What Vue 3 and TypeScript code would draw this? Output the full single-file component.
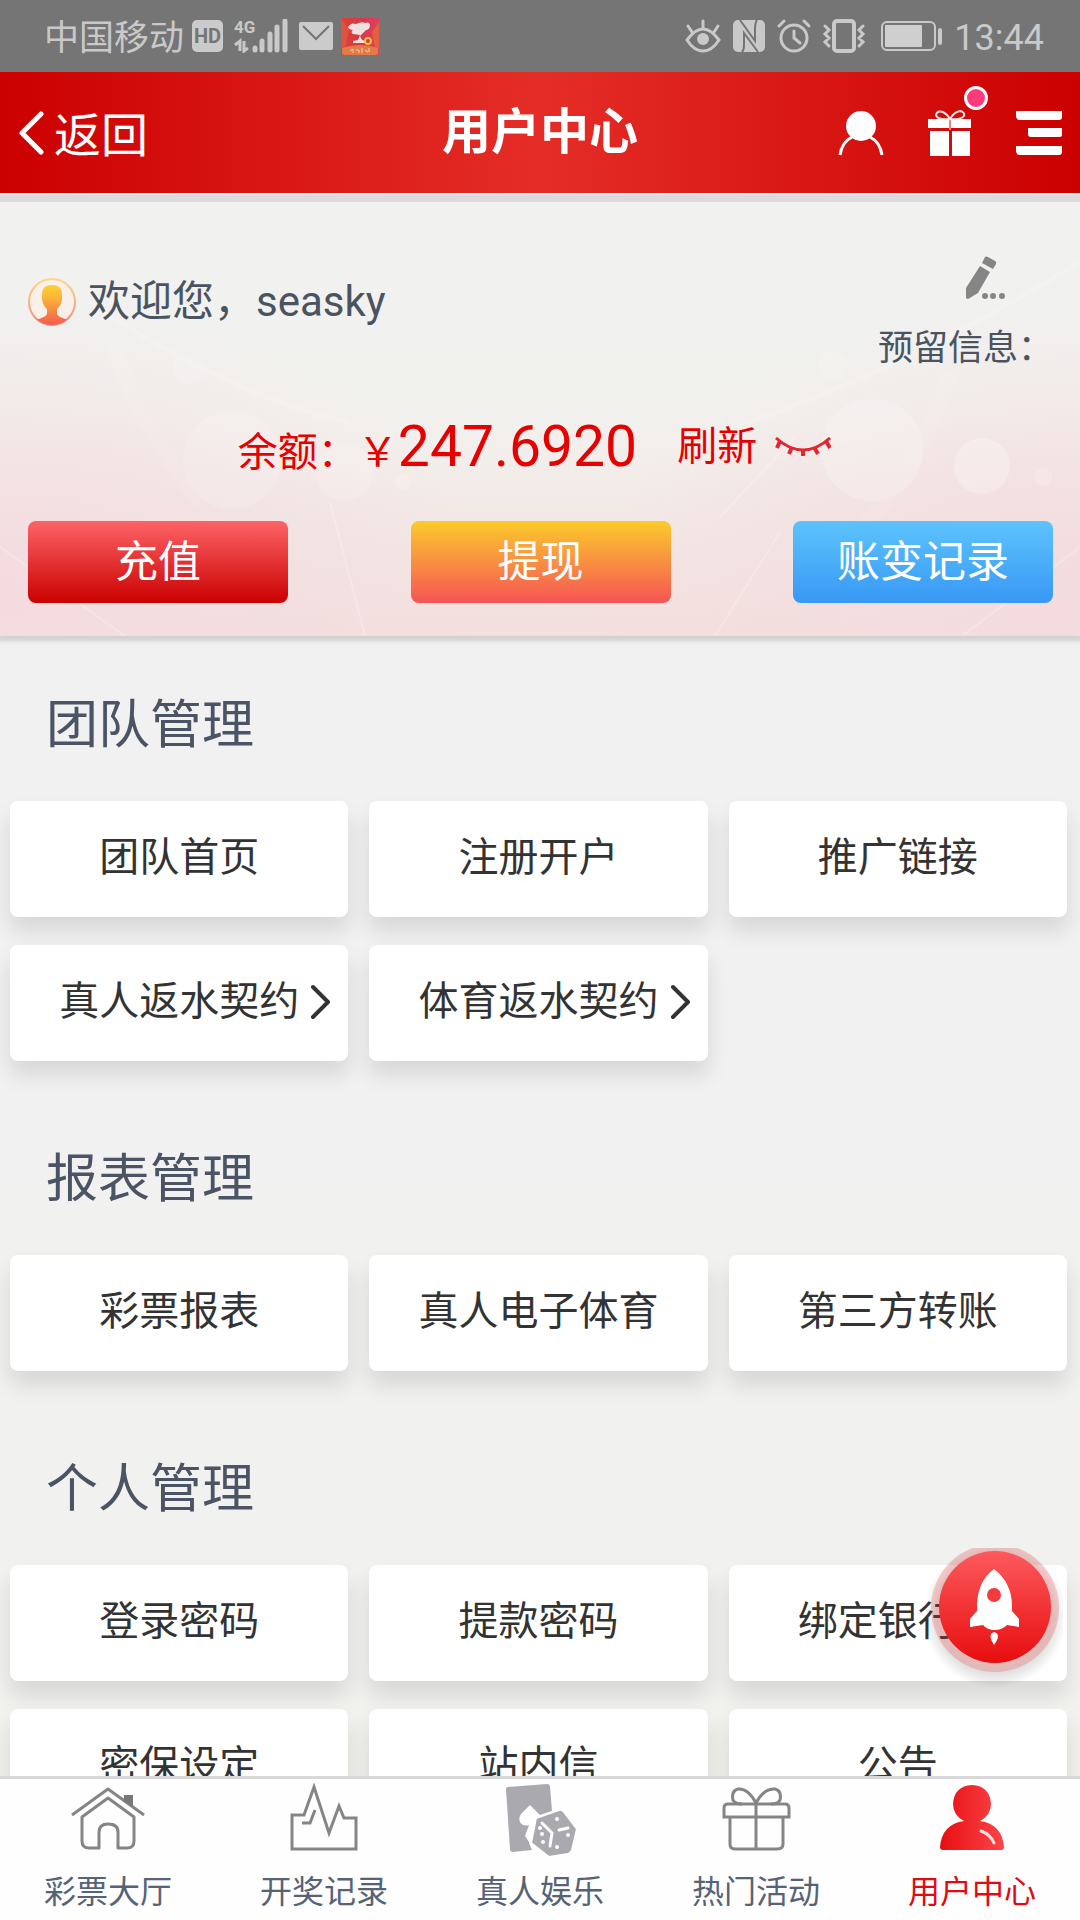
<script setup lang="ts">
interface Card {
  label: string
  arrow?: boolean
}

interface Section {
  title: string
  cards: Card[]
}

interface Tab {
  label: string
  icon: 'home' | 'chart' | 'games' | 'gift' | 'user'
  active?: boolean
}

const sections: Section[] = [
  {
    title: '团队管理',
    cards: [
      { label: '团队首页' },
      { label: '注册开户' },
      { label: '推广链接' },
      { label: '真人返水契约', arrow: true },
      { label: '体育返水契约', arrow: true },
    ],
  },
  {
    title: '报表管理',
    cards: [{ label: '彩票报表' }, { label: '真人电子体育' }, { label: '第三方转账' }],
  },
  {
    title: '个人管理',
    cards: [
      { label: '登录密码' },
      { label: '提款密码' },
      { label: '绑定银行卡' },
      { label: '密保设定' },
      { label: '站内信' },
      { label: '公告' },
    ],
  },
]

const tabs: Tab[] = [
  { label: '彩票大厅', icon: 'home' },
  { label: '开奖记录', icon: 'chart' },
  { label: '真人娱乐', icon: 'games' },
  { label: '热门活动', icon: 'gift' },
  { label: '用户中心', icon: 'user', active: true },
]
</script>

<template>
  <div class="app">
    <div class="status">
      <div class="status-left">
        <span class="carrier">中国移动</span>
        <span class="hd">HD</span>
        <span class="network">
          <span class="network-type">4G</span>
          <svg class="signal" width="54" height="34" viewBox="0 0 54 34" fill="none" stroke="#c9c9c9">
            <path d="M1 26 L6 22 V32 M10 22 V32 L14 29" stroke-width="3" />
            <path d="M21 29v2M28 22v9M36 15v16M43 8v23M51 2v29" stroke-width="5" stroke-linecap="round" />
          </svg>
        </span>
        <svg class="mail" width="34" height="28" viewBox="0 0 34 28">
          <rect width="34" height="28" rx="2" fill="#cbcbcb" />
          <path d="M4 4 L17 17 L30 4" fill="none" stroke="#757575" stroke-width="2" />
        </svg>
        <svg width="38" height="37" viewBox="0 0 38 37">
          <defs>
            <linearGradient id="shop" x1="0" y1="0" x2="1" y2="0">
              <stop offset="0" stop-color="#dc4138" />
              <stop offset=".5" stop-color="#d93745" />
              <stop offset="1" stop-color="#df4060" />
            </linearGradient>
          </defs>
          <rect width="38" height="37" fill="url(#shop)" />
          <path d="M0 0 L8 12 L4 30 H0Z" fill="#dd5540" />
          <path d="M38 4 L31 14 L34 30 H38Z" fill="#e2603f" />
          <path d="M1 30 Q19 24 37 30 V34 Q37 37 34 37 H4 Q1 37 1 34Z" fill="#e27b45" />
          <path d="M7 9 Q10 4 15 6 Q21 3 24 5 Q29 3 29 8 Q28 12 25 12 L19 18 L21 22 L25 23 V25 H12 V23 L17 22 L19 17 L12 16 Q9 14 12 12 Q8 12 7 9Z" fill="#eee1df" />
          <circle cx="27" cy="23" r="3" fill="none" stroke="#e7c436" stroke-width="2" />
          <path d="M9 33 l3 -2 v4 m3 -3 h3 v3 m3 -5 v5 m3 -3 l3 2 m1 -4 v4" fill="none" stroke="#f1cdb4" stroke-width="1" />
        </svg>
      </div>
      <div class="status-right">
        <svg width="36" height="34" viewBox="0 0 36 34" fill="none" stroke="#c9c9c9" stroke-width="3" stroke-linecap="round">
          <path d="M2 21 Q10 10 18 10 Q26 10 34 21 Q27 32 18 32 Q9 32 2 21Z" />
          <circle cx="18" cy="20" r="6" fill="#c9c9c9" stroke="none" />
          <path d="M18 2v7M3 7l4 6M33 7l-4 6" />
        </svg>
        <svg width="34" height="34" viewBox="0 0 34 34">
          <rect x="1" y="1" width="32" height="32" rx="5" fill="#c9c9c9" />
          <path d="M8 1 L23 22 V10 Q23 4 25 1 M26 33 L12 14 V26 Q12 31 10 33" fill="none" stroke="#757575" stroke-width="2" />
        </svg>
        <svg width="34" height="34" viewBox="0 0 34 34" fill="none" stroke="#c9c9c9" stroke-width="3" stroke-linecap="round">
          <circle cx="17" cy="19" r="13" />
          <path d="M17 12v7l6 5M2 7l5-5M32 7l-5-5" />
        </svg>
        <svg width="44" height="34" viewBox="0 0 44 34" fill="none" stroke="#c9c9c9">
          <rect x="12" y="2" width="20" height="30" rx="3" stroke-width="4" />
          <path d="M3 7l4 4-4 4 4 4-4 4 4 4M41 7l-4 4 4 4-4 4 4 4-4 4" stroke-width="3" stroke-linecap="round" />
        </svg>
        <svg class="battery" width="62" height="30" viewBox="0 0 62 30">
          <rect x="1" y="1" width="53" height="28" rx="5" fill="none" stroke="#c9c9c9" stroke-width="2" />
          <rect x="4" y="4" width="37" height="22" rx="1" fill="#cfcfcf" />
          <rect x="57" y="7" width="4" height="17" rx="2" fill="#c9c9c9" />
        </svg>
        <time class="clock">13:44</time>
      </div>
    </div>

    <header class="header">
      <a class="back" href="#">
        <svg width="26" height="46" viewBox="0 0 26 46" fill="none" stroke="#fff" stroke-width="5" stroke-linecap="round" stroke-linejoin="round">
          <path d="M23 4 L4 23 L23 42" />
        </svg>
        <span class="back-label">返回</span>
      </a>
      <h1 class="title">用户中心</h1>
      <div class="tools">
        <button class="tool" type="button" aria-label="账户">
          <svg width="46" height="46" viewBox="0 0 46 46">
            <circle cx="23" cy="16" r="15" fill="#fff" />
            <path d="M2 45 Q4 32 14 27 M32 27 Q42 32 44 45" fill="none" stroke="#fff" stroke-width="3" />
          </svg>
        </button>
        <button class="tool" type="button" aria-label="活动">
          <svg width="46" height="46" viewBox="0 0 46 46">
            <path d="M1 9h43v9H1zM3 21h19v25H3zM25 21h18v25H25z" fill="#fff" />
            <path d="M23 9v11" stroke="#e58080" stroke-width="2" />
            <path d="M22 9 Q10 10 9 5 Q10 0 16 2 Q20 4 23 9 Q27 2 33 1 Q38 2 37 6 Q34 10 23 9" fill="none" stroke="#ffe8e8" stroke-width="2" />
          </svg>
          <span class="dot"></span>
        </button>
        <button class="tool" type="button" aria-label="菜单">
          <svg width="46" height="46" viewBox="0 0 46 46" fill="#fff">
            <path d="M0 1h46v6q0 3-3 3H4q-4 0-4-4zM12 18h34v7q0 2-3 2H15q-3 0-3-3zM0 36h46v6q0 3-3 3H4q-4 0-4-4z" />
          </svg>
        </button>
      </div>
    </header>

    <main class="content">
      <section class="hero">
        <svg class="hero-art" viewBox="0 0 1080 434" preserveAspectRatio="none" fill="none" aria-hidden="true">
          <circle cx="232" cy="258" r="49" fill="#fff" fill-opacity=".15" />
          <circle cx="344" cy="270" r="29" fill="#fff" fill-opacity=".15" />
          <circle cx="403" cy="280" r="8" fill="#fff" fill-opacity=".15" />
          <circle cx="872" cy="248" r="51" fill="#fff" fill-opacity=".2" />
          <circle cx="982" cy="264" r="28" fill="#fff" fill-opacity=".25" />
          <circle cx="1043" cy="275" r="9" fill="#fff" fill-opacity=".2" />
          <circle cx="833" cy="164" r="15" fill="#fff" fill-opacity=".15" />
          <circle cx="190" cy="165" r="17" fill="#fff" fill-opacity=".12" />
          <path d="M90 100 Q220 190 350 221 M745 221 Q900 170 1080 60" stroke="#fff" stroke-opacity=".16" stroke-width="5" />
          <path d="M0 345 L125 434 M330 300 L365 434 M715 434 L780 330 M720 315 L795 235 M962 434 L1080 345" stroke="#fff" stroke-opacity=".22" stroke-width="2" />
          <path d="M110 130 Q130 210 200 300 M950 170 Q920 270 860 325" stroke="#fff" stroke-opacity=".08" stroke-width="16" />
        </svg>
        <div class="hero-top">
          <div class="welcome">
            <svg width="49" height="49" viewBox="0 0 49 49">
              <defs>
                <linearGradient id="avatar" x1="0" y1="0" x2="0" y2="1">
                  <stop offset="0" stop-color="#fbd02f" />
                  <stop offset=".3" stop-color="#fbb53a" />
                  <stop offset="1" stop-color="#f2544f" />
                </linearGradient>
                <clipPath id="avatar-clip"><circle cx="24" cy="24" r="23" /></clipPath>
                <linearGradient id="avatar-ring" x1="0" y1="0" x2="0" y2="1">
                  <stop offset="0" stop-color="#f9d98a" />
                  <stop offset="1" stop-color="#f08a7c" />
                </linearGradient>
              </defs>
              <circle cx="24" cy="24" r="23" fill="#f9f0ea" stroke="url(#avatar-ring)" stroke-width="2" />
              <path clip-path="url(#avatar-clip)" d="M24 7 Q34 7 34 16 Q35 26 29 31 V36 Q31 40 42 42 V49 H6 V42 Q17 40 19 36 V31 Q13 26 14 16 Q14 7 24 7Z" fill="url(#avatar)" />
            </svg>
            <span>欢迎您，seasky</span>
          </div>
          <div class="reserved">
            <button class="plain edit" type="button" aria-label="编辑预留信息">
              <svg width="42" height="44" viewBox="0 0 42 44" fill="#858585">
                <path d="M20 1 Q21 0 23 1 L30 5 Q32 6 31 8 L28 13 L17 7ZM15 10 L25 16 L13 37 L3 43 Q1 43 1 41 L1 32Z" />
                <circle cx="20" cy="40" r="3" />
                <circle cx="28" cy="40" r="3" />
                <circle cx="37" cy="40" r="3" />
              </svg>
            </button>
            <span>预留信息：</span>
          </div>
        </div>
        <div class="balance">
          <div class="sum">余额：￥<strong class="amount">247.6920</strong></div>
          <button class="plain refresh" type="button">刷新</button>
          <button class="plain hide" type="button" aria-label="隐藏余额">
            <svg width="56" height="20" viewBox="0 0 56 20" fill="none" stroke="#e02833" stroke-width="3">
              <path d="M1 1 Q14 13 28 13 Q42 13 55 1" />
              <path d="M5 4 L2 11 M17 10 L14 17 M28 12 V19 M39 10 L43 17 M51 4 L55 11" stroke-width="4" />
            </svg>
          </button>
        </div>
        <div class="actions">
          <button class="action recharge" type="button">充值</button>
          <button class="action withdraw" type="button">提现</button>
          <button class="action records" type="button">账变记录</button>
        </div>
      </section>

      <section v-for="section in sections" :key="section.title" class="group">
        <h2 class="group-title">{{ section.title }}</h2>
        <div class="cards">
          <a v-for="card in section.cards" :key="card.label" class="card" href="#">
            {{ card.label }}
            <svg v-if="card.arrow" class="arrow" width="22" height="36" viewBox="0 0 22 36" fill="none" stroke="#333" stroke-width="4" stroke-linecap="round" stroke-linejoin="round">
              <path d="M3 3 L18 18 L3 33" />
            </svg>
          </a>
        </div>
      </section>
    </main>

    <button class="rocket" type="button" aria-label="快速导航">
      <svg width="136" height="142" viewBox="0 0 136 142">
        <defs>
          <linearGradient id="rocket-fill" x1="0" y1="0" x2="0" y2="1">
            <stop offset="0" stop-color="#fd5a5d" />
            <stop offset="1" stop-color="#e70d0e" />
          </linearGradient>
          <radialGradient id="rocket-shade">
            <stop offset=".8" stop-color="#000" stop-opacity=".12" />
            <stop offset="1" stop-color="#000" stop-opacity="0" />
          </radialGradient>
        </defs>
        <circle cx="68" cy="68" r="72" fill="url(#rocket-shade)" />
        <circle cx="68" cy="60" r="64" fill="#e8444a" fill-opacity=".26" />
        <circle cx="68" cy="59" r="56" fill="url(#rocket-fill)" />
        <path d="M67 21 Q85 35 85 58 V63 L92 71 V79 L80 77 Q75 82 68 82 Q60 82 56 77 L43 79 V71 L50 63 V56 Q51 33 67 21Z" fill="#fff" />
        <circle cx="67" cy="47" r="7" fill="#f43a3d" />
        <path d="M67 84 Q75 86 67 97 Q60 86 67 84Z" fill="#fff" />
      </svg>
    </button>

    <nav class="tabs">
      <a v-for="tab in tabs" :key="tab.label" class="tab" :class="{ active: tab.active }" href="#">
        <svg v-if="tab.icon === 'home'" width="76" height="68" viewBox="0 0 76 68" fill="none" stroke="#858585" stroke-width="3" stroke-linejoin="round">
          <path d="M2 32 L38 6 L74 32" />
          <path d="M12 34 L38 15 L64 34 V58 Q64 65 57 65 H48 V49 Q48 41 38 41 Q29 41 29 49 V65 H19 Q12 65 12 58Z" />
          <path d="M54 12 H63 V24 L54 18Z" fill="#777" stroke="none" />
        </svg>
        <svg v-else-if="tab.icon === 'chart'" width="76" height="68" viewBox="0 0 76 68" fill="none" stroke="#858585" stroke-width="3">
          <path d="M6 66 V32 H18 L28 4 L43 50 L53 23 L58 35 H70 V66Z" />
          <path d="M16 40 H24 L29 27" />
        </svg>
        <svg v-else-if="tab.icon === 'games'" width="76" height="74" viewBox="0 0 76 74">
          <path d="M4 6 Q4 4 6 4 L45 1 Q48 1 48 4 L50 28 L32 34 L27 60 L30 67 L11 69 Q8 69 8 66Z" fill="#a9a9af" />
          <path d="M28 22 L38 32 L34 38 L29 62 L23 53 L27 42 Q21 44 18 39 Q16 34 20 30Z" fill="#fff" />
          <path d="M34 35 L57 27 Q60 26 62 29 L75 46 L70 67 Q69 70 66 71 L47 74 L29 60Z" fill="#a9a9af" stroke="#fff" stroke-width="2" stroke-linejoin="round" />
          <path d="M40 40 L50 50 L48 63 M57 47 L66 45" fill="none" stroke="#fff" stroke-width="3" stroke-linecap="round" />
          <g fill="#fff">
            <circle cx="55" cy="36" r="2" /><circle cx="38" cy="45" r="2" /><circle cx="40" cy="51" r="2" />
            <circle cx="41" cy="59" r="2" /><circle cx="66" cy="52" r="2" /><circle cx="55" cy="64" r="2" />
          </g>
        </svg>
        <svg v-else-if="tab.icon === 'gift'" width="76" height="68" viewBox="0 0 76 68" fill="none" stroke="#858585" stroke-width="3">
          <path d="M12 34 V61 Q12 66 17 66 H59 Q65 66 65 61 V34" />
          <path d="M6 34 V25 Q6 21 10 21 H67 Q71 21 71 25 V34Z M38 21 V66" />
          <path d="M38 20 Q30 5 20 6 Q13 8 15 17 Q17 21 24 21 M38 20 Q46 5 57 6 Q64 8 62 17 Q60 21 53 21" />
        </svg>
        <svg v-else width="76" height="68" viewBox="0 0 76 68">
          <defs>
            <linearGradient id="user-fill" x1="0" y1="0" x2="1" y2="0">
              <stop offset="0" stop-color="#e60f12" />
              <stop offset="1" stop-color="#fc4549" />
            </linearGradient>
          </defs>
          <path d="M30 38 Q19 32 19 21 Q20 3 38 2 Q56 3 57 21 Q57 32 46 38 Q68 41 70 64 Q70 67 67 67 H9 Q6 67 6 64 Q8 41 30 38Z" fill="url(#user-fill)" />
          <path d="M47 48 Q56 51 60 60" fill="none" stroke="#ffe0e0" stroke-width="3" stroke-linecap="round" />
        </svg>
        <span class="tab-label">{{ tab.label }}</span>
      </a>
    </nav>
  </div>
</template>

<style>
body {
  background: #f1f1f1;
}
</style>

<style scoped>
.app {
  position: relative;
  display: flex;
  flex-direction: column;
  height: 100vh;
  overflow: hidden;
  background: linear-gradient(#f1f1f1 60%, #f2f1ee);
  font-family: Roboto, "Noto Sans CJK SC", sans-serif;
}

button {
  font-family: inherit;
  border: 0;
  cursor: pointer;
}

a {
  color: inherit;
  text-decoration: none;
}

svg {
  display: block;
  flex: none;
}

.status {
  flex: none;
  display: flex;
  justify-content: space-between;
  align-items: center;
  height: 72px;
  padding: 0 36px 0 44px;
  background: #757575;
  color: #c9c9c9;
}

.status-left,
.status-right {
  display: flex;
  align-items: center;
}

.status-left {
  gap: 8px;
}

.status-right {
  gap: 11px;
}

.carrier {
  padding-top: 6px;
  font-size: 35px;
  line-height: 52px;
}

.hd {
  width: 31px;
  border-radius: 5px;
  background: #cbcbcb;
  color: #757575;
  font-size: 20px;
  font-weight: 700;
  line-height: 32px;
  text-align: center;
}

.network {
  position: relative;
  margin: 0 3px;
}

.network-type {
  position: absolute;
  top: 0;
  left: 0;
  font-size: 17px;
  font-weight: 700;
  line-height: 17px;
}

.battery {
  margin-left: 4px;
}

.clock {
  padding-top: 4px;
  font-size: 36px;
  line-height: 44px;
}

.header {
  flex: none;
  display: grid;
  grid-template-columns: 1fr auto 1fr;
  align-items: center;
  height: 121px;
  padding: 0 18px;
  border-bottom: 2px solid #f6eeee;
  background: linear-gradient(90deg, #cb0000, #e52d28 50%, #cb0000);
  background-clip: padding-box;
  color: #fff;
}

.back {
  display: flex;
  align-items: center;
  gap: 10px;
  font-size: 47px;
  line-height: 60px;
}

.back-label {
  padding-top: 6px;
}

.title {
  margin: 0;
  font-size: 49px;
  font-weight: 700;
  line-height: 60px;
}

.tools {
  display: flex;
  justify-content: flex-end;
  gap: 43px;
}

.tool {
  position: relative;
  padding: 0;
  background: none;
}

.dot {
  position: absolute;
  top: -24px;
  right: -15px;
  width: 18px;
  height: 18px;
  border: 3px solid #fff;
  border-radius: 50%;
  background: #ff3b7c;
}

.content {
  flex: 1;
  min-height: 0;
  overflow-y: auto;
  scrollbar-width: none;
}

.hero {
  position: relative;
  padding: 54px 27px 33px 28px;
  border-top: 7px solid #dcdadd;
  background:
    radial-gradient(ellipse 45% 65% at 0 90%, #f4dbe0, transparent),
    radial-gradient(ellipse 45% 65% at 100% 90%, #f4dbde, transparent),
    linear-gradient(#f1f1f1, #f2f1ee 50%, #f3dfdd);
  box-shadow: 0 3px 4px 2px #d2d0d0;
  color: #4a5360;
}

.hero-art {
  position: absolute;
  inset: 0;
  width: 100%;
  height: 100%;
}

.hero-top,
.balance,
.actions {
  position: relative;
  display: flex;
}

.hero-top {
  justify-content: space-between;
  align-items: flex-start;
}

.welcome {
  display: flex;
  align-items: center;
  gap: 11px;
  padding-top: 16px;
  font-size: 42px;
  line-height: 60px;
}

.reserved {
  display: flex;
  flex-direction: column;
  align-items: flex-end;
  gap: 24px;
  font-size: 35px;
  line-height: 50px;
}

.plain {
  padding: 0;
  background: none;
  color: inherit;
}

.edit {
  margin-right: 46px;
}

.balance {
  justify-content: center;
  align-items: center;
  height: 72px;
  margin-top: 37px;
  padding-right: 12px;
  color: #e60000;
}

.sum {
  padding-top: 6px;
  font-size: 40px;
  line-height: 72px;
}

.amount {
  font-size: 57px;
  font-weight: 400;
}

.refresh {
  margin: 0 18px 0 40px;
  font-size: 40px;
  line-height: 60px;
}

.actions {
  justify-content: space-between;
  margin-top: 38px;
}

.action {
  width: 260px;
  height: 82px;
  padding: 0;
  border-radius: 8px;
  color: #fff;
  font-size: 43px;
  line-height: 60px;
}

.recharge {
  background: linear-gradient(#fd6467, #ca0000);
}

.withdraw {
  background: linear-gradient(#fbcb2c, #f65455);
}

.records {
  background: linear-gradient(#5dc3fc, #3898f5);
}

.group-title {
  margin: 0;
  padding: 52px 46px 37px;
  color: #4a5464;
  font-size: 52px;
  font-weight: 400;
  line-height: 76px;
}

.cards {
  display: grid;
  grid-template-columns: repeat(3, 1fr);
  gap: 28px 21px;
  padding: 0 13px 29px 10px;
}

.card {
  position: relative;
  display: flex;
  justify-content: center;
  align-items: center;
  height: 114px;
  padding-bottom: 2px;
  border-radius: 8px;
  background: #fff;
  box-shadow: 0 14px 22px rgba(0, 0, 0, 0.11);
  color: #333;
  font-size: 40px;
  line-height: 60px;
  white-space: nowrap;
}

.arrow {
  position: absolute;
  right: 16px;
}

.rocket {
  position: absolute;
  right: 17px;
  bottom: 230px;
  padding: 0;
  background: none;
}

.tabs {
  position: relative;
  flex: none;
  display: flex;
  height: 141px;
  border-top: 3px solid #d9d9d9;
  background: #fefefe;
  color: #566377;
}

.tab {
  flex: 1;
  display: flex;
  flex-direction: column;
  justify-content: space-between;
  align-items: center;
  padding: 4px 0;
}

.tab-label {
  font-size: 32px;
  line-height: 48px;
}

.active {
  color: #e20b12;
}
</style>
